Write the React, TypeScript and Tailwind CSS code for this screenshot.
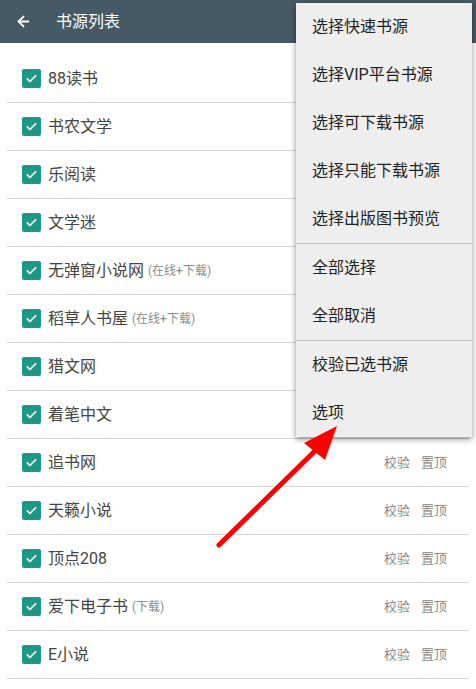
import { ArrowLeft } from 'lucide-react';

type Source = { name: string; tag?: string };

const sources: Source[] = [
  { name: '88读书' },
  { name: '书农文学' },
  { name: '乐阅读' },
  { name: '文学迷' },
  { name: '无弹窗小说网', tag: '(在线+下载)' },
  { name: '稻草人书屋', tag: '(在线+下载)' },
  { name: '猎文网' },
  { name: '着笔中文' },
  { name: '追书网' },
  { name: '天籁小说' },
  { name: '顶点208' },
  { name: '爱下电子书', tag: '(下载)' },
  { name: 'E小说' },
];

const menuGroups: string[][] = [
  ['选择快速书源', '选择VIP平台书源', '选择可下载书源', '选择只能下载书源', '选择出版图书预览'],
  ['全部选择', '全部取消'],
  ['校验已选书源', '选项'],
];

function Checkbox() {
  return (
    <span className="flex h-[19px] w-[19px] items-center justify-center rounded-[2px] bg-[#1e9886]">
      <svg width="13" height="13" viewBox="0 0 24 24" fill="none" stroke="white" strokeWidth="3" strokeLinecap="round" strokeLinejoin="round">
        <path d="M4 12.5l5 5L20 6.5" />
      </svg>
    </span>
  );
}

export default function App() {
  return (
    <div
      className="relative h-[689px] w-[476px] overflow-hidden bg-white"
      style={{ fontFamily: "Roboto, 'Noto Sans CJK SC', sans-serif" }}
    >
      <header className="flex h-[43px] items-center bg-[#465a65] text-white">
        <ArrowLeft className="ml-[15px] h-[17px] w-[17px]" strokeWidth={2.5} />
        <span className="ml-[24px] text-[16px]">书源列表</span>
      </header>

      <ul className="pt-[12px]">
        {sources.map((s) => (
          <li
            key={s.name}
            className="mx-[7px] flex h-[48px] items-center border-b border-[#d4d4d4] pl-[15px] pr-[22px]"
          >
            <Checkbox />
            <span className="ml-[7px] text-[16px] text-[#444]">{s.name}</span>
            {s.tag && <span className="ml-[4px] text-[12px] text-[#8a8a8a]">{s.tag}</span>}
            <span className="ml-auto flex gap-[11px] text-[13px] text-[#8a8a8a]">
              <span>校验</span>
              <span>置顶</span>
            </span>
          </li>
        ))}
      </ul>

      <div className="absolute left-[296px] top-[3px] w-[176px] bg-[#eeeeee] shadow-[0_2px_6px_rgba(0,0,0,0.45)]">
        {menuGroups.map((group, gi) => (
          <div key={gi} className={gi > 0 ? 'border-t border-[#bdbdbd]' : ''}>
            {group.map((item) => (
              <div key={item} className="flex h-[48px] items-center pl-[16px] text-[16px] text-[#222]">
                {item}
              </div>
            ))}
          </div>
        ))}
      </div>

      <svg className="absolute left-0 top-0" width="476" height="689" viewBox="0 0 476 689">
        <line x1="219" y1="545" x2="318" y2="448" stroke="#ff0000" strokeWidth="5" strokeLinecap="round" />
        <polygon points="337,426 304,443 325,460" fill="#ff0000" />
      </svg>
    </div>
  );
}
